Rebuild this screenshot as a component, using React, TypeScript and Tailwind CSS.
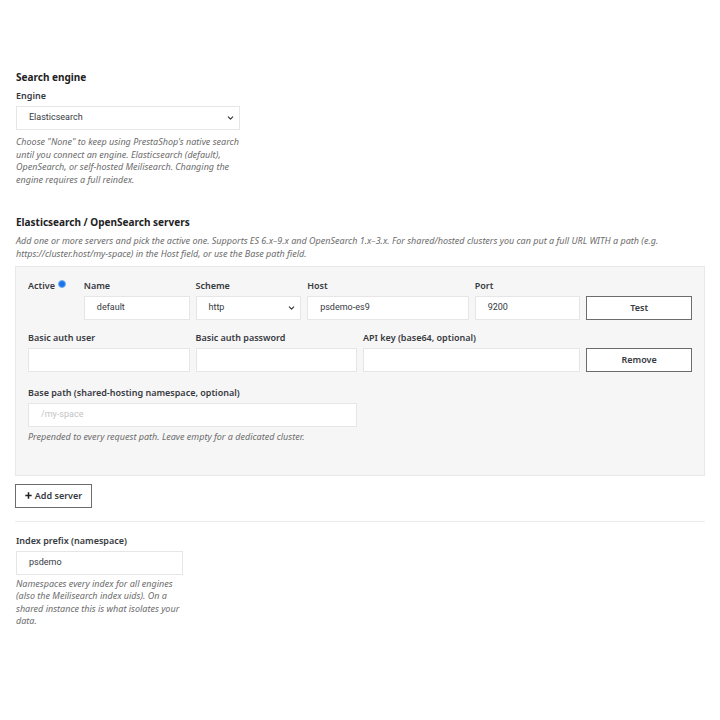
import React from "react";

const Chevron = () => (
  <svg width="7" height="7" viewBox="0 0 16 16" className="absolute right-[5px] top-1/2 -translate-y-1/2 text-[#333]">
    <path d="M3 5.5l5 5 5-5" fill="none" stroke="currentColor" strokeWidth="2.6" strokeLinecap="round" strokeLinejoin="round" />
  </svg>
);

const Label = ({ children, className = "" }: { children: React.ReactNode; className?: string }) => (
  <div className={"text-[9px] leading-[12px] font-semibold text-[#363a41] " + className}>{children}</div>
);

const Input = ({ value = "", placeholder = "", className = "" }: { value?: string; placeholder?: string; className?: string }) => (
  <div className={"h-[24px] bg-white border border-[#e6e6e6] flex items-center px-[12px] text-[9px] " + className} style={{ fontFamily: "Roboto, 'Liberation Sans', sans-serif" }}>
    {value ? <span className="text-[#363a41]">{value}</span> : <span className="text-[#c4c4c4]">{placeholder}</span>}
  </div>
);

const Select = ({ value, className = "" }: { value: string; className?: string }) => (
  <div className={"relative h-[24px] bg-white border border-[#e6e6e6] flex items-center px-[12px] text-[9px] text-[#363a41] " + className} style={{ fontFamily: "Roboto, 'Liberation Sans', sans-serif" }}>
    {value}
    <Chevron />
  </div>
);

const Btn = ({ children, className = "" }: { children: React.ReactNode; className?: string }) => (
  <div className={"h-[24px] bg-white border border-[#6c6c6c] flex items-center justify-center text-[9px] font-semibold text-[#363a41] " + className}>{children}</div>
);

const Help = ({ children, className = "" }: { children: React.ReactNode; className?: string }) => (
  <div className={"text-[9px] leading-[12.5px] italic text-[#6c6c6c] " + className}>{children}</div>
);

export default function App() {
  return (
    <div className="w-[720px] h-[720px] bg-white pl-[15px] pr-[15px] pt-[70px]" style={{ fontFamily: "'Noto Sans', 'Open Sans', sans-serif" }}>
      <div className="text-[10px] leading-[14px] font-bold text-[#222] pl-[1px]">Search engine</div>
      <Label className="mt-[6px] pl-[1px]">Engine</Label>
      <div className="pl-[1px] w-[225px]">
        <Select value="Elasticsearch" className="mt-[4px] w-[224px]" />
        <Help className="mt-[6px]">
          Choose "None" to keep using PrestaShop's native search until you connect an engine. Elasticsearch (default), OpenSearch, or self-hosted Meilisearch. Changing the engine requires a full reindex.
        </Help>
      </div>

      <div className="mt-[29px] text-[10px] leading-[14px] font-bold text-[#222] pl-[1px]">Elasticsearch / OpenSearch servers</div>
      <Help className="mt-[6px] pl-[1px]">
        Add one or more servers and pick the active one. Supports ES 6.x–9.x and OpenSearch 1.x–3.x. For shared/hosted clusters you can put a full URL WITH a path (e.g. https://cluster.host/my-space) in the Host field, or use the Base path field.
      </Help>

      <div className="mt-[6px] bg-[#f6f6f6] border border-[#e8e8e8] px-[12px] pt-[13px] pb-[31px]">
        <div className="grid grid-cols-12 gap-x-[6px] items-end">
          <div className="col-span-1 self-start flex items-center gap-[3px]">
            <Label>Active</Label>
            <span className="w-[8px] h-[8px] rounded-full bg-[#1a73e8] border border-[#7ab0f5] inline-block -mt-[4px]" />
          </div>
          <div className="col-span-2">
            <Label>Name</Label>
            <Input value="default" className="mt-[4px]" />
          </div>
          <div className="col-span-2">
            <Label>Scheme</Label>
            <Select value="http" className="mt-[4px]" />
          </div>
          <div className="col-span-3">
            <Label>Host</Label>
            <Input value="psdemo-es9" className="mt-[4px]" />
          </div>
          <div className="col-span-2">
            <Label>Port</Label>
            <Input value="9200" className="mt-[4px]" />
          </div>
          <div className="col-span-2">
            <Btn>Test</Btn>
          </div>
        </div>

        <div className="grid grid-cols-12 gap-x-[6px] items-end mt-[12px]">
          <div className="col-span-3">
            <Label>Basic auth user</Label>
            <Input className="mt-[4px]" />
          </div>
          <div className="col-span-3">
            <Label>Basic auth password</Label>
            <Input className="mt-[4px]" />
          </div>
          <div className="col-span-4">
            <Label>API key (base64, optional)</Label>
            <Input className="mt-[4px]" />
          </div>
          <div className="col-span-2">
            <Btn>Remove</Btn>
          </div>
        </div>

        <div className="grid grid-cols-12 gap-x-[6px] mt-[15px]">
          <div className="col-span-6">
            <Label>Base path (shared-hosting namespace, optional)</Label>
            <Input placeholder="/my-space" className="mt-[4px]" />
          </div>
        </div>
        <Help className="mt-[4px]">Prepended to every request path. Leave empty for a dedicated cluster.</Help>
      </div>

      <div className="mt-[8px] flex">
        <Btn className="w-[77px] gap-[3px]">
          <svg width="7" height="7" viewBox="0 0 10 10" className="text-[#222]">
            <path d="M5 0.5v9M0.5 5h9" stroke="currentColor" strokeWidth="2.2" />
          </svg>
          <span>Add server</span>
        </Btn>
      </div>

      <div className="mt-[13px] border-t border-[#ececec]" />

      <div className="pl-[1px]">
        <Label className="mt-[13px]">Index prefix (namespace)</Label>
        <Input value="psdemo" className="mt-[4px] w-[167px]" />
        <Help className="mt-[3px] w-[170px]">
          Namespaces every index for all engines (also the Meilisearch index uids). On a shared instance this is what isolates your data.
        </Help>
      </div>
    </div>
  );
}
